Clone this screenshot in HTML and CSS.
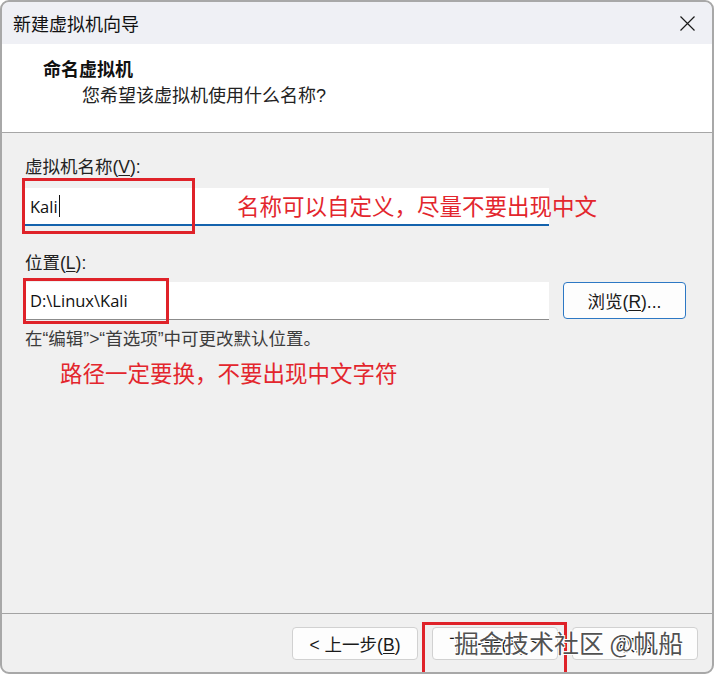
FILE: index.html
```html
<!DOCTYPE html>
<html lang="zh-CN">
<head>
<meta charset="utf-8">
<title>新建虚拟机向导</title>
<link rel="stylesheet" href="styles.css">
</head>
<body>
<div class="window">
  <div class="titlebar">
    <span class="title">新建虚拟机向导</span>
    <svg class="close" width="15" height="15" viewBox="0 0 15 15"><path d="M0.5 0.5 L14.5 14.5 M14.5 0.5 L0.5 14.5" stroke="#1a1a1a" stroke-width="1.2" fill="none"/></svg>
  </div>
  <div class="header">
    <div class="h-title">命名虚拟机</div>
    <div class="h-sub">您希望该虚拟机使用什么名称?</div>
  </div>
  <div class="content">
    <div class="label label-name">虚拟机名称(<span class="u">V</span>):</div>
    <div class="field field-name"><span class="val">Kali</span><span class="caret"></span></div>
    <div class="label label-loc">位置(<span class="u">L</span>):</div>
    <div class="row">
      <div class="field field-loc"><span class="val">D:\Linux\Kali</span></div>
      <button class="btn btn-browse">浏览(<span class="u">R</span>)...</button>
    </div>
    <div class="hint">在“编辑”&gt;“首选项”中可更改默认位置。</div>
    <div class="note">路径一定要换，不要出现中文字符</div>
  </div>
  <div class="footer">
    <button class="btn btn-foot">&lt; 上一步(<span class="u">B</span>)</button>
    <button class="btn btn-foot">下一步(<span class="u">N</span>) &gt;</button>
    <button class="btn btn-foot">取消</button>
  </div>

  <div class="note-overlay">名称可以自定义，尽量不要出现中文</div>
  <div class="redbox box-name"></div>
  <div class="redbox box-loc"></div>
  <div class="redbox box-next"></div>
  <div class="watermark">掘金技术社区 @帆船</div>
</div>
</body>
</html>
```

FILE: styles.css
```css
html, body {
  margin: 0;
  padding: 0;
  background: #ffffff;
}
body {
  width: 714px;
  height: 674px;
  overflow: hidden;
  font-family: "Liberation Sans", "Noto Sans CJK SC", sans-serif;
  color: #1a1a1a;
}
.window {
  position: relative;
  box-sizing: border-box;
  width: 714px;
  height: 674px;
  border: 2px solid #a8a8a8;
  border-radius: 9px;
  background: #f0f0f0;
  display: flex;
  flex-direction: column;
  overflow: hidden;
}
.titlebar {
  height: 42px;
  flex: none;
  background: #eff0f5;
  display: flex;
  align-items: center;
  justify-content: space-between;
  padding: 0 17px 0 11px;
  border-radius: 7px 7px 0 0;
}
.title {
  font-family: "Noto Sans CJK SC", sans-serif;
  font-size: 18px;
  line-height: 24px;
  color: #111;
}
.close {
  display: block;
}
.header {
  height: 89px;
  flex: none;
  box-sizing: border-box;
  background: #ffffff;
  border-bottom: 1px solid #a6a6a6;
  padding: 12px 0 0 41px;
}
.h-title {
  font-family: "Noto Sans CJK SC", sans-serif;
  font-weight: 700;
  font-size: 18px;
  line-height: 24px;
  color: #111;
}
.h-sub {
  margin: 4px 0 0 39px;
  font-size: 18px;
  line-height: 24px;
  color: #222;
}
.content {
  flex: 1;
  padding: 23px 26px 0 23px;
}
.label {
  font-size: 17.5px;
  line-height: 22px;
  color: #222;
}
.u {
  text-decoration: underline;
  text-underline-offset: 2px;
}
.field {
  box-sizing: border-box;
  height: 38px;
  background: #ffffff;
  display: flex;
  align-items: center;
  padding-left: 5px;
  font-family: "Open Sans", "Noto Sans", sans-serif;
  font-size: 16.5px;
  color: #111;
}
.field-name {
  width: 524px;
  margin-top: 10px;
  border-bottom: 2px solid #1463ad;
}
.caret {
  display: inline-block;
  width: 1px;
  height: 22px;
  background: #111;
  margin-left: 1px;
}
.label-loc {
  margin-top: 26px;
}
.row {
  display: flex;
  gap: 14px;
  margin-top: 8px;
}
.field-loc {
  width: 524px;
  border-bottom: 1px solid #8c8c8c;
}
.btn {
  box-sizing: border-box;
  background: #fdfdfd;
  border: 1px solid #d1d1d1;
  border-radius: 4px;
  font-family: "Liberation Sans", "Noto Sans CJK SC", sans-serif;
  font-size: 17.5px;
  color: #1a1a1a;
  padding: 0;
  margin: 0;
}
.btn-browse {
  width: 123px;
  height: 37px;
  border-color: #2d78c4;
}
.hint {
  margin-top: 8px;
  font-size: 17.5px;
  line-height: 22px;
  color: #3c3c3c;
}
.note {
  margin: 7px 0 0 35px;
  font-family: "Noto Sans CJK SC", sans-serif;
  font-size: 22.5px;
  line-height: 30px;
  color: #e3262d;
}
.footer {
  flex: none;
  height: 59px;
  box-sizing: border-box;
  border-top: 1px solid #a3a3a3;
  padding: 13px 14px 0 0;
  display: flex;
  justify-content: flex-end;
  gap: 14px;
}
.btn-foot {
  width: 126px;
  height: 33px;
}
.note-overlay {
  position: absolute;
  left: 235px;
  top: 188px;
  font-family: "Noto Sans CJK SC", sans-serif;
  font-size: 22.5px;
  line-height: 30px;
  color: #e3262d;
  white-space: nowrap;
}
.redbox {
  position: absolute;
  box-sizing: border-box;
  border: 3px solid #df2229;
}
.box-name {
  left: 20px;
  top: 176px;
  width: 173px;
  height: 56px;
}
.box-loc {
  left: 21px;
  top: 276px;
  width: 146px;
  height: 46px;
}
.box-next {
  left: 420px;
  top: 620px;
  width: 145px;
  height: 54px;
}
.watermark {
  position: absolute;
  left: 452px;
  top: 623px;
  font-family: "Noto Sans CJK SC", sans-serif;
  font-size: 25px;
  line-height: 34px;
  color: rgba(50, 50, 50, 0.85);
  white-space: nowrap;
  text-shadow: 1px 1px 0 #fff, -1px -1px 0 #fff, 1px -1px 0 #fff, -1px 1px 0 #fff;
}
```
